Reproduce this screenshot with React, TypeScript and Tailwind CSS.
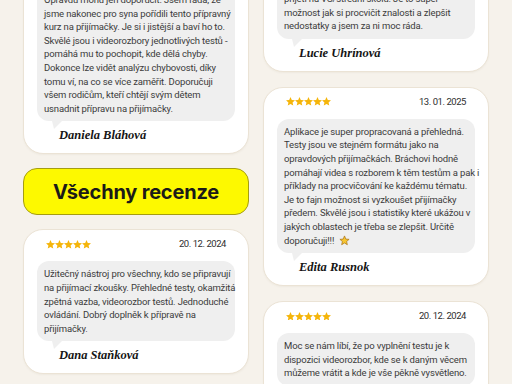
import React from 'react';

type Review = {
  date: string;
  name: string;
  lines: React.ReactNode[];
};

const STAR = 'M12 2l2.9 6.9 7.1.6-5.4 4.7 1.6 7-6.2-3.8-6.2 3.8 1.6-7L2 9.5l7.1-.6z';

const EmojiStar = () => (
  <svg viewBox="0 0 24 24" className="ml-[3px] inline-block h-[11px] w-[11px] align-[-2px]">
    <path d={STAR} fill="#f8c630" stroke="#a8741a" strokeWidth="1.6" strokeLinejoin="round" />
  </svg>
);

const leftTop: Review = {
  date: '20. 12. 2024',
  name: 'Daniela Bláhová',
  lines: [
    'Opravdu mohu jen doporučit. Jsem ráda, že',
    'jsme nakonec pro syna pořídili tento přípravný',
    'kurz na přijímačky. Je si i jistější a baví ho to.',
    'Skvělé jsou i videorozbory jednotlivých testů -',
    'pomáhá mu to pochopit, kde dělá chyby.',
    'Dokonce lze vidět analýzu chybovosti, díky',
    'tomu ví, na co se více zaměřit. Doporučuji',
    'všem rodičům, kteří chtějí svým dětem',
    'usnadnit přípravu na přijímačky.',
  ],
};

const leftBottom: Review = {
  date: '20. 12. 2024',
  name: 'Dana Staňková',
  lines: [
    'Užitečný nástroj pro všechny, kdo se připravují',
    'na přijímací zkoušky. Přehledné testy, okamžitá',
    'zpětná vazba, videorozbor testů. Jednoduché',
    'ovládání. Dobrý doplněk k přípravě na',
    'přijímačky.',
  ],
};

const rightTop: Review = {
  date: '13. 01. 2025',
  name: 'Lucie Uhrínová',
  lines: [
    'přijetí na VŠ/střední školu. Je to super',
    'možnost jak si procvičit znalosti a zlepšit',
    'nedostatky a jsem za ni moc ráda.',
  ],
};

const rightMiddle: Review = {
  date: '13. 01. 2025',
  name: 'Edita Rusnok',
  lines: [
    'Aplikace je super propracovaná a přehledná.',
    'Testy jsou ve stejném formátu jako na',
    'opravdových přijímačkách. Bráchovi hodně',
    'pomáhají videa s rozborem k těm testům a pak i',
    'příklady na procvičování ke každému tématu.',
    'Je to fajn možnost si vyzkoušet přijímačky',
    'předem. Skvělé jsou i statistiky které ukážou v',
    'jakých oblastech je třeba se zlepšit. Určitě',
    <>
      doporučuji!!! <EmojiStar />
    </>,
  ],
};

const rightBottom: Review = {
  date: '20. 12. 2024',
  name: '',
  lines: [
    'Moc se nám líbí, že po vyplnění testu je k',
    'dispozici videorozbor, kde se k daným věcem',
    'můžeme vrátit a kde je vše pěkně vysvětleno.',
  ],
};

const Stars = () => (
  <div className="flex">
    {[0, 1, 2, 3, 4].map((i) => (
      <svg key={i} viewBox="2 2 20 19.2" className="h-[8.6px] w-[9px]">
        <path d={STAR} fill="#f5b50a" />
      </svg>
    ))}
  </div>
);

const ReviewCard = ({ review }: { review: Review }) => (
  <div className="rounded-[20px] border border-[#ebe3d5] bg-white px-[13px] pb-[10px] pt-[7px] shadow-[0_1px_2px_rgba(120,100,60,0.06)]">
    {/* rating + date */}
    <div className="flex h-[14px] items-center justify-between px-[9px]">
      <Stars />
      <span className="text-[9.5px] tracking-[-0.45px] text-[#2e2e2e]">{review.date}</span>
    </div>

    {/* speech bubble */}
    <div className="relative mt-[10px] rounded-[12px] bg-[#efefef] px-[7px] py-[6px] text-[9.5px] leading-[13.6px] tracking-[-0.15px] text-[#3b3b3b]">
      {review.lines.map((line, i) => (
        <div key={i} className="whitespace-nowrap">
          {line}
        </div>
      ))}
      <svg viewBox="0 0 10 8" className="absolute left-[15px] top-full h-[8px] w-[10px]">
        <polygon points="0,0 10,0 2,8" fill="#efefef" />
      </svg>
    </div>

    <div className="mt-[6px] h-[16px] pl-[22px] font-['Liberation_Serif',serif] text-[12.5px] font-bold italic leading-[16px] text-[#151515]">
      {review.name}
    </div>
  </div>
);

export default function App() {
  return (
    <div className="h-[384px] w-[512px] overflow-hidden bg-[#f6f2eb] font-['Roboto',sans-serif]">
      <div className="flex gap-[14px] px-[23px]">
        <div className="-mt-[45px] flex w-[226px] flex-col gap-[14px]">
          <ReviewCard review={leftTop} />
          <button className="flex h-[47px] items-center justify-center rounded-[14px] border border-[#a59d12] bg-[#fdf900] font-['Inter',sans-serif] text-[20px] font-bold tracking-[-0.2px] text-[#1b1b18]">
            Všechny recenze
          </button>
          <ReviewCard review={leftBottom} />
        </div>
        <div className="-mt-[46px] flex w-[226px] flex-col gap-[15px]">
          <ReviewCard review={rightTop} />
          <ReviewCard review={rightMiddle} />
          <ReviewCard review={rightBottom} />
        </div>
      </div>
    </div>
  );
}
